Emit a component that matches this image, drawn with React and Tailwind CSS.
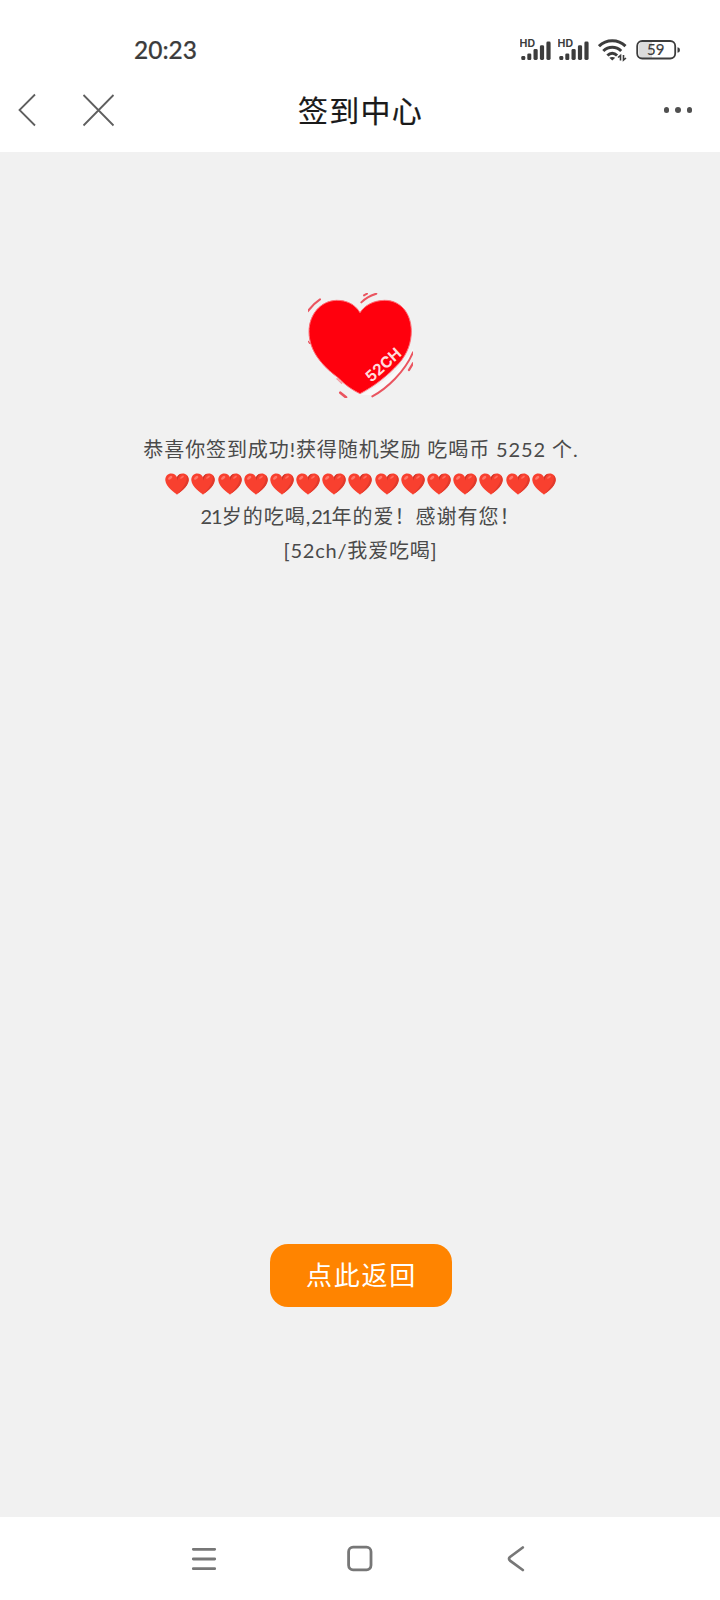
import React from "react";

const fontStack =
  "font-['Lato','Noto_Sans_CJK_SC',sans-serif]";

const SignalIcon = () => (
  <svg className="h-6 w-[34px]" viewBox="0 0 34 24" fill="#3c3c3c">
    <text
      x="-0.500"
      y="8.800"
      fontSize="10"
      fontWeight="700"
      fontFamily="Inter, sans-serif"
      textLength="15.500"
      lengthAdjust="spacingAndGlyphs"
    >
      HD
    </text>
    <rect x="1.300" y="18" width="4" height="4" rx="1.300" />
    <rect x="7.300" y="15.500" width="4" height="6.500" rx="1.300" />
    <rect x="13.500" y="11" width="4.200" height="11" rx="1.400" />
    <rect x="19.900" y="7.300" width="4.200" height="14.700" rx="1.400" />
    <rect x="26.400" y="3.500" width="4.200" height="18.500" rx="1.400" />
  </svg>
);

const WifiIcon = () => (
  <svg className="h-6 w-[30px]" viewBox="0 0 30 24" fill="none" stroke="#3c3c3c">
    <path d="M1 8.200C8.500 1 20 1 27.500 8.200" strokeWidth="3" />
    <path d="M5.300 13C10.500 8 18 8 23.200 13" strokeWidth="3" />
    <path d="M9.400 17.500C12.400 14.600 16.100 14.600 19.100 17.500" strokeWidth="3" />
    <path d="M11.300 19.800C13 18.600 15.500 18.600 17.200 19.800L14.300 22.500Z" fill="#3c3c3c" stroke="none" />
    <path d="M22.500 22.500V17.500L20 19.500M25.500 17V22L28 20" strokeWidth="1.600" />
  </svg>
);

const BatteryIcon = () => (
  <svg className="h-6 w-[46px]" viewBox="0 0 46 24">
    <path d="M7 4H16V20H7Q3 20 3 16V8Q3 4 7 4Z" fill="#dcdcdc" />
    <rect x="1.200" y="3" width="38" height="17.500" rx="5" fill="none" stroke="#3c3c3c" strokeWidth="1.800" />
    <path d="M41.500 9.200Q44 9.500 44 12T41.500 14.800Z" fill="#3c3c3c" />
    <text
      x="19.800"
      y="17.200"
      fontSize="15"
      textAnchor="middle"
      fill="#3c3c3c"
      fontFamily="Lato, sans-serif"
      stroke="#3c3c3c"
      strokeWidth="0.200"
      textLength="17.500"
    >
      59
    </text>
  </svg>
);

const StatusBar = () => (
  <div className="flex h-[68px] items-end justify-between pr-[38px] pb-[4px] pl-[134px]">
    <span className="text-[24.500px] leading-[28px] font-medium text-[#3c3c3c] [-webkit-text-stroke:0.2px_#3c3c3c]">
      20:23
    </span>
    <div className="flex items-center pb-[2px]">
      <SignalIcon />
      <span className="w-1" />
      <SignalIcon />
      <span className="w-[6px]" />
      <WifiIcon />
      <span className="w-[8px]" />
      <BatteryIcon />
    </div>
  </div>
);

const TitleBar = () => (
  <header className="grid h-[84px] grid-cols-3 items-center">
    <div className="flex items-center pl-[18px]">
      <svg className="h-[34px] w-[18px]" viewBox="0 0 18 34" fill="none" stroke="#5f5f5f" strokeWidth="1.8">
        <path d="M17 1.500L1.500 17L17 32.500" />
      </svg>
      <svg className="ml-[46px] h-[34px] w-[34px]" viewBox="0 0 34 34" fill="none" stroke="#5f5f5f" strokeWidth="1.8">
        <path d="M1.500 2L31.500 32.500M31.500 2L1.500 32.500" />
      </svg>
    </div>
    <h1 className="pl-px text-center text-[30px] leading-[40px] tracking-[1.2px] whitespace-nowrap text-[#1a1a1a] [-webkit-text-stroke:0.2px_#1a1a1a]">
      签到中心
    </h1>
    <div className="flex justify-end gap-[6px] pr-[28px]">
      <i className="h-[5.5px] w-[5.5px] rounded-full bg-[#505050]" />
      <i className="h-[5.5px] w-[5.5px] rounded-full bg-[#505050]" />
      <i className="h-[5.5px] w-[5.5px] rounded-full bg-[#505050]" />
    </div>
  </header>
);

const HeartLogo = () => (
  <svg className="h-[105px] w-[105px]" viewBox="39 39 315 315">
    <path d="M198 344C245 325 330 262 354 205V222C325 280 270 325 232 345Z" fill="#fff" opacity="0.6" />
    <path
      d="M195 98C178 70 152 61 125 61C76 62 42 105 42 155C42 215 85 260 128 292C150 315 172 330 195 341C232 322 276 290 312 250C338 220 349 188 349 152C348 98 315 60 268 61C235 62 210 75 195 98Z"
      fill="#ff000d"
      stroke="#ff7078"
      strokeWidth="3"
    />
    <g fill="none" stroke="#ea5560" strokeLinecap="round">
      <path d="M38 94Q54 72 75 58" strokeWidth="6" />
      <path d="M199 67Q218 48 244 41" strokeWidth="6" />
      <path d="M207 46L216 41" strokeWidth="6" />
      <path d="M232 349C275 326 330 275 354 217" strokeWidth="6" />
      <path d="M342 270L354 250" strokeWidth="7" />
      <path d="M136 338L153 352" strokeWidth="8" />
      <path d="M40 184L44 190" strokeWidth="4" />
      <path d="M126 296L140 310" strokeWidth="4" stroke="#f59aa0" />
    </g>
    <text
      transform="translate(229 309) rotate(-42)"
      fontSize="46"
      fontWeight="700"
      fontFamily="Inter, sans-serif"
      textLength="126"
      lengthAdjust="spacingAndGlyphs"
      fill="#ffdcdc"
    >
      52CH
    </text>
  </svg>
);

const EmojiHeart = () => (
  <svg className="h-[22px] w-[24px]" viewBox="0 0 24 22">
    <path
      d="M12 21.800C10.500 19.800 .8 14.500 .3 7.300C.1 3 3 .5 6.300 .5C9 .5 11 2 12 4.300C13 2 15 .5 17.700 .5C21 .5 23.900 3 23.700 7.300C23.200 14.500 13.500 19.800 12 21.800Z"
      fill="#f8402f"
    />
    <path d="M12 21.800C13.500 19.800 23.200 14.500 23.700 7.300C23.800 5 22.900 3.300 21.700 2.200C23 10 17 15.500 12 21.800Z" fill="#e03a2c" />
    <path d="M12 4.300C12.600 2.600 14.200 1.100 16.200 .8C14.300 2.300 13.300 4.500 12.400 7.500Z" fill="#c9352a" />
    <ellipse cx="5.200" cy="4.800" rx="2.500" ry="1.400" transform="rotate(-40 5.200 4.800)" fill="#ff7568" />
    <ellipse cx="17" cy="4.200" rx="2.200" ry="1" transform="rotate(-35 17 4.200)" fill="#ff6a5c" />
  </svg>
);

const NavBar = () => (
  <nav className="flex h-[83px] items-center pl-[191px]">
    <svg className="h-[28px] w-[26px]" viewBox="0 0 26 28" stroke="#777" strokeWidth="2.800" strokeLinecap="round">
      <path d="M2.300 4.300H23.700M2.300 14H23.700M2.300 23.700H23.700" />
    </svg>
    <svg className="ml-[129px] h-[28px] w-[28px]" viewBox="0 0 28 28" fill="none" stroke="#777" strokeWidth="2.800">
      <rect x="2.600" y="2.200" width="22.400" height="22.600" rx="4.500" />
    </svg>
    <svg className="ml-[133px] h-[28px] w-[18px]" viewBox="0 0 18 28" fill="none" stroke="#777" strokeWidth="2.700" strokeLinecap="round">
      <path d="M15.800 2.500L3 12Q1 13.800 3 15.600L15.800 25" />
    </svg>
  </nav>
);

const App = () => {
  return (
    <div className={`flex h-[1600px] w-[720px] flex-col bg-white ${fontStack}`}>
      <StatusBar />
      <TitleBar />

      <main className="flex flex-1 flex-col items-center bg-[#f1f1f1] pt-[141px]">
        <HeartLogo />

        <div className="mt-[35px] flex flex-col items-center text-[20px] leading-[33.6px] whitespace-nowrap text-[#4a4a4a]">
          <p className="pl-[2px] tracking-[0.9px]">恭喜你签到成功!获得随机奖励 吃喝币 5252 个.</p>
          <div className="flex h-[33.6px] items-center gap-[2.2px] pt-[1px] pl-[1px]">
            {Array.from({ length: 15 }).map((_, i) => (
              <EmojiHeart key={i} />
            ))}
          </div>
          <p className="pl-px tracking-[1px]">
            <span className="tracking-[-1px]">21</span>岁的吃喝,
            <span className="tracking-[-1.5px]">21</span>年的爱！感谢有您！
          </p>
          <p className="pl-px tracking-[0.8px]">[52ch/我爱吃喝]</p>
        </div>

        <button className="mt-auto mb-[210px] ml-px h-[63px] w-[182px] rounded-[18px] bg-[#ff8400] pl-[2px] text-[26px] tracking-[1.7px] text-white">
          点此返回
        </button>
      </main>

      <NavBar />
    </div>
  );
};

export default App;
